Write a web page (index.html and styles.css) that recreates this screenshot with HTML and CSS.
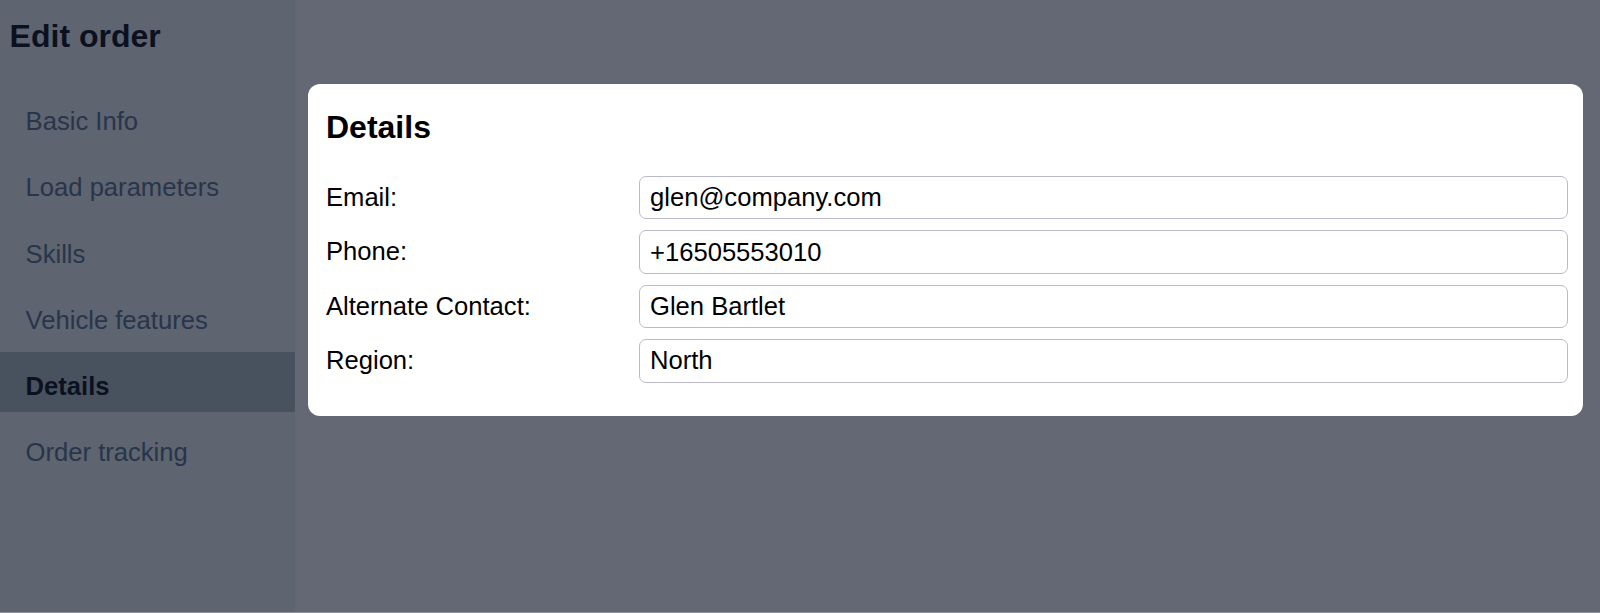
FILE: index.html
```html
<!DOCTYPE html>
<html lang="en">
<head>
<meta charset="utf-8">
<title>Edit order</title>
<link rel="stylesheet" href="styles.css">
</head>
<body>
<div class="app">
  <aside class="sidebar">
    <h1 class="sidebar-title">Edit order</h1>
    <nav class="nav">
      <a class="nav-item">Basic Info</a>
      <a class="nav-item">Load parameters</a>
      <a class="nav-item">Skills</a>
      <a class="nav-item">Vehicle features</a>
      <a class="nav-item active">Details</a>
      <a class="nav-item">Order tracking</a>
    </nav>
  </aside>
  <main class="main">
    <section class="card">
      <h2 class="card-title">Details</h2>
      <div class="form">
        <label class="label" for="email">Email:</label>
        <input class="input" id="email" type="text" value="glen@company.com">
        <label class="label" for="phone">Phone:</label>
        <input class="input" id="phone" type="text" value="+16505553010">
        <label class="label" for="alt">Alternate Contact:</label>
        <input class="input" id="alt" type="text" value="Glen Bartlet">
        <label class="label" for="region">Region:</label>
        <input class="input" id="region" type="text" value="North">
      </div>
    </section>
  </main>
</div>
</body>
</html>
```

FILE: styles.css
```css
html, body {
  margin: 0;
  padding: 0;
}
body {
  font-family: "Liberation Sans", Arial, Helvetica, sans-serif;
  font-size: 25.6px;
  background: #636874;
  color: #000;
}
.app {
  display: flex;
  height: 612px;
  border-bottom: 1px solid #8e939b;
  background: #636874;
  overflow: hidden;
}
.sidebar {
  width: 295px;
  flex: 0 0 295px;
  background: #5e6470;
  display: flex;
  flex-direction: column;
}
.sidebar-title {
  margin: 0;
  padding: 17.7px 0 0 9.6px;
  font-size: 32px;
  font-weight: bold;
  line-height: normal;
  color: #0b1120;
}
.nav {
  display: flex;
  flex-direction: column;
  gap: 6.2px;
  margin-top: 33px;
}
.nav-item {
  display: block;
  height: 60px;
  box-sizing: border-box;
  padding: 18.5px 0 11.5px 25.6px;
  line-height: 30px;
  color: #28354b;
  text-decoration: none;
}
.nav-item.active {
  background: #48515e;
  color: #0b1120;
  font-weight: bold;
}
.main {
  flex: 1;
  padding: 84px 17px 0 13px;
  min-width: 0;
}
.card {
  background: #fff;
  border-radius: 12px;
  padding: 25px 15px 33px 18px;
}
.card-title {
  margin: 0 0 30px 0;
  font-size: 32px;
  font-weight: bold;
  line-height: normal;
  color: #000;
}
.form {
  display: grid;
  grid-template-columns: 313px 1fr;
  row-gap: 11px;
}
.label {
  padding-top: 7px;
  line-height: normal;
  color: #000;
}
.input {
  box-sizing: border-box;
  width: 100%;
  height: 43.4px;
  margin: 0;
  padding: 0 10px;
  border: 1.5px solid #babac8;
  border-radius: 7px;
  font-family: "Liberation Sans", Arial, Helvetica, sans-serif;
  font-size: 25.6px;
  color: #000;
  background: #fff;
  outline: none;
}
```
